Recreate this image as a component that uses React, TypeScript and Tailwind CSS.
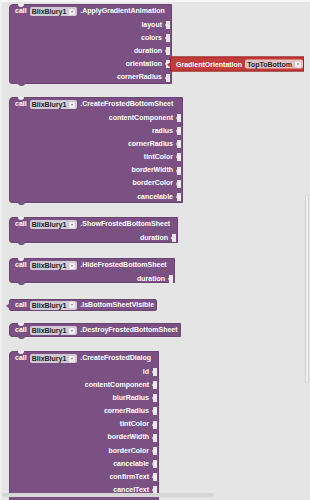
import React from "react";

type BlockProps = {
  width: number;
  height: number;
  title: string;
  inputs?: string[];
  value?: boolean;
  extra?: Record<string, React.ReactNode>;
  className?: string;
};

const font = {fontFamily: '"Liberation Sans", Arial, sans-serif'};

const Notch = () => (
  <svg width="5" height="8" viewBox="0 0 5 8" className="absolute right-[1px] top-1/2 -translate-y-1/2">
    <path d="M1 0H5V8H1V5.6L0 4L1 2.4Z" fill="#ece8ed"/>
  </svg>
);

const Dropdown = ({label, bg}: {label: string; bg: string}) => (
  <span className={`inline-flex items-center h-[9px] rounded-[2px] px-[2px] gap-[3px] text-[#262626] ${bg}`}>
    <span className="leading-none">{label}</span>
    <span className="w-[6px] h-[6px] rounded-[1px] bg-[#f2eef3] flex items-center justify-center">
      <span className="border-l-[1.5px] border-r-[1.5px] border-t-[2px] border-l-transparent border-r-transparent border-t-[#777]"/>
    </span>
  </span>
);

const GradientBlock = () => (
  <div className="absolute left-[calc(100%-1px)] top-1/2 -translate-y-1/2 h-[15px] w-[134px] bg-[#c23c3b] border border-[#9c2626] flex items-center pl-[5px] gap-[3px] text-white">
    <span className="absolute -left-[4px] top-[4px] w-[4px] h-[6px] bg-[#b03232] [clip-path:polygon(0_50%,100%_0,100%_100%)]"/>
    <span>GradientOrientation</span>
    <Dropdown label="TopToBottom" bg="bg-[#e5c0c0]"/>
  </div>
);

const Block = ({width, height, title, inputs = [], value, extra = {}, className = ""}: BlockProps) => (
  <div
    className={`relative shrink-0 bg-[#7b5184] border border-[#6c4474] text-white text-[7px] font-bold ${value ? "rounded-[2px]" : "rounded-tl-[4px] rounded-bl-[3px]"} ${className}`}
    style={{width, height}}
  >
    {value ? (
      <span className="absolute -left-[4px] top-[3px] w-[4px] h-[6px] bg-[#7b5184] [clip-path:polygon(0_50%,100%_0,100%_100%)]"/>
    ) : (
      <>
        <span className="absolute top-[-1px] left-[8px] w-[6px] h-[2.5px] rounded-b-full bg-[#f3f1f3]"/>
        <span className="absolute -bottom-[3px] left-[8px] w-[7px] h-[3px] rounded-b-full bg-[#7b5184]"/>
      </>
    )}
    <div className={`flex items-center gap-[3px] pl-[5px] ${value ? "h-[10px]" : "h-[13.2px]"}`}>
      <span>call</span>
      <Dropdown label="BlixBlury1" bg="bg-[#d3c9d5]"/>
      <span>.{title}</span>
    </div>
    {inputs.map((name) => (
      <div key={name} className="relative h-[13.2px] flex items-center justify-end pr-[9px]">
        <span>{name}</span>
        <Notch/>
        {extra[name]}
      </div>
    ))}
  </div>
);

export default function App() {
  return (
    <div className="relative w-[310px] h-[500px] overflow-hidden bg-[#e5e5e5] border-t-2 border-l-2 border-t-[#f6f6f6] border-l-[#eeeeee]" style={font}>
      <div className="flex flex-col items-start pl-[7px] pt-[2px]">
        <Block
          width={163}
          height={80}
          title="ApplyGradientAnimation"
          inputs={["layout", "colors", "duration", "orientation", "cornerRadius"]}
          extra={{orientation: <GradientBlock/>}}
        />
        <Block
          width={174}
          height={106}
          className="mt-[13px]"
          title="CreateFrostedBottomSheet"
          inputs={["contentComponent", "radius", "cornerRadius", "tintColor", "borderWidth", "borderColor", "cancelable"]}
        />
        <Block width={169} height={26} className="mt-[14px]" title="ShowFrostedBottomSheet" inputs={["duration"]}/>
        <Block width={166} height={25} className="mt-[15px]" title="HideFrostedBottomSheet" inputs={["duration"]}/>
        <Block width={148} height={12} className="mt-[16px]" title="IsBottomSheetVisible" value/>
        <Block width={172} height={14} className="mt-[12px]" title="DestroyFrostedBottomSheet"/>
        <Block
          width={150}
          height={152}
          className="mt-[14px]"
          title="CreateFrostedDialog"
          inputs={["id", "contentComponent", "blurRadius", "cornerRadius", "tintColor", "borderWidth", "borderColor", "cancelable", "confirmText", "cancelText"]}
        />
      </div>
      <div className="absolute right-[1px] top-[193px] w-[4px] h-[188px] bg-[#f1f1f1] border border-[#d2d2d2]"/>
      <div className="absolute left-0 top-[491px] w-[212px] h-[4px] rounded-full bg-[#d5d5d5]"/>
    </div>
  );
}
